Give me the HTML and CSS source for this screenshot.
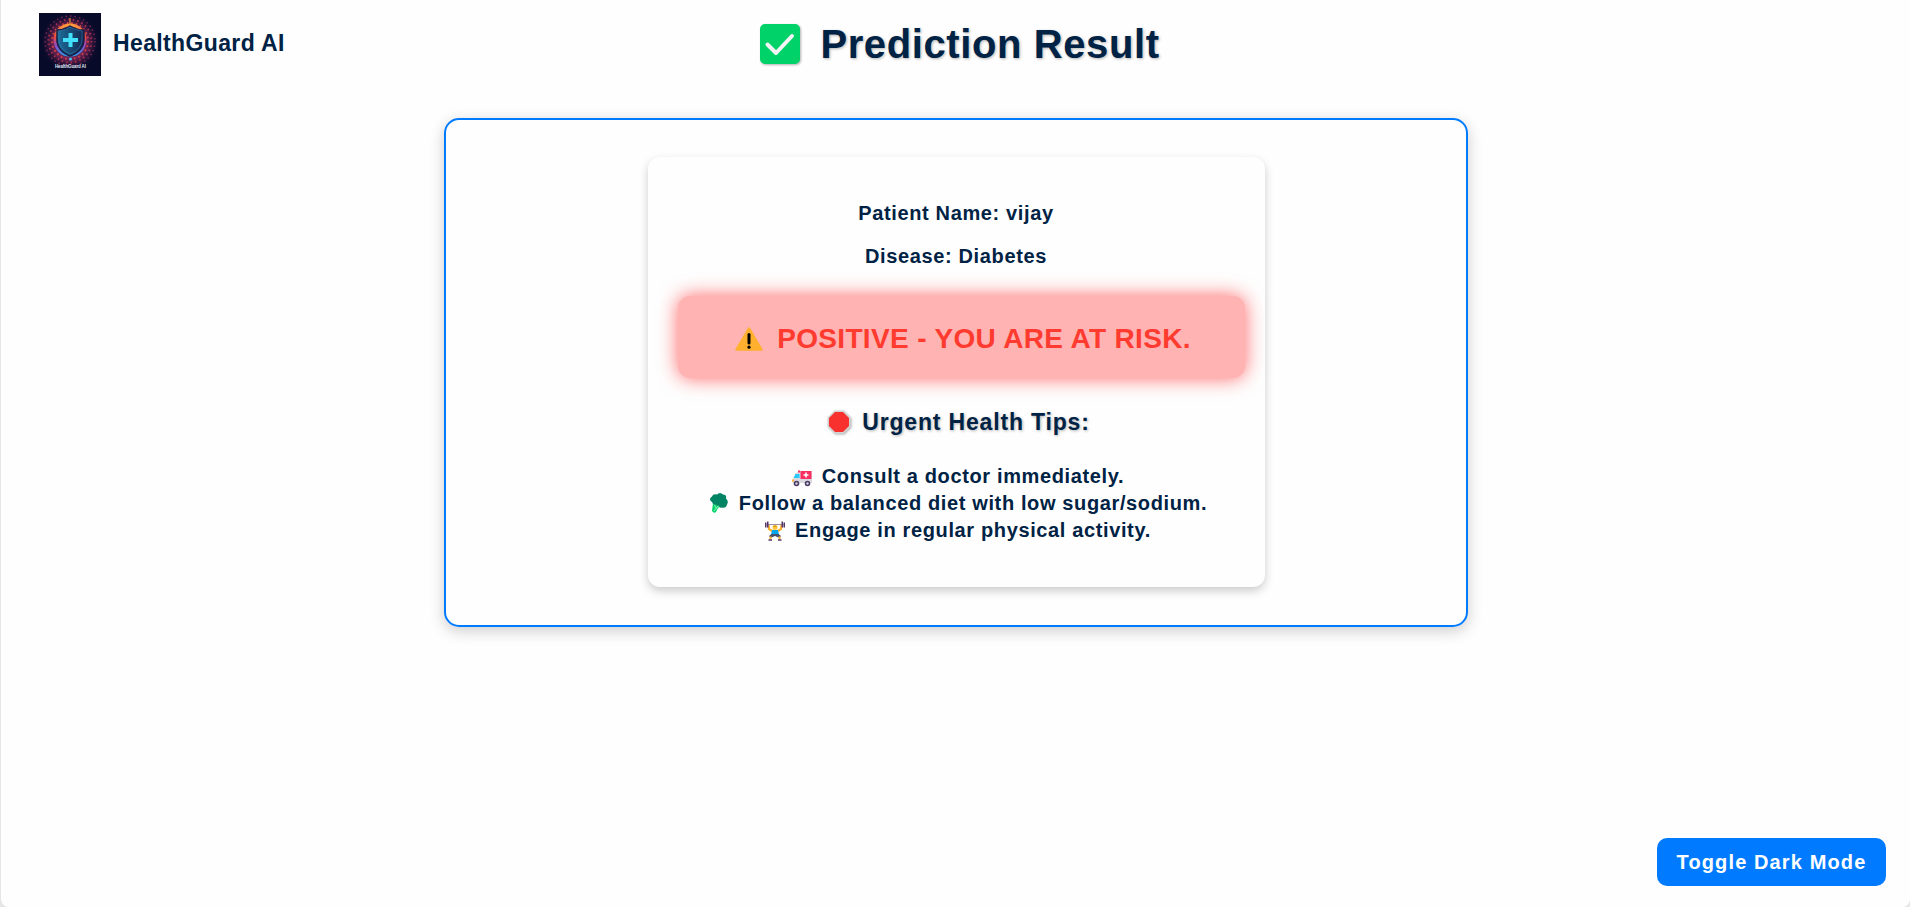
FILE: index.html
```html
<!DOCTYPE html>
<html lang="en">
<head>
<meta charset="utf-8">
<title>Prediction Result</title>
<link rel="stylesheet" href="styles.css">
</head>
<body>
<div class="page">
  <header class="header">
    <div class="brand">
      <svg class="logo" viewBox="0 0 62 63">
        <defs>
          <radialGradient id="glow"><stop offset="0" stop-color="#8a3474"/><stop offset=".6" stop-color="#6a2250"/><stop offset="1" stop-color="#070c2b" stop-opacity="0"/></radialGradient>
          <linearGradient id="ring" x2="0" y2="1"><stop offset="0" stop-color="#ff9a3c"/><stop offset=".4" stop-color="#ee4a3e"/><stop offset=".7" stop-color="#8a4bc8"/><stop offset="1" stop-color="#2b9df0"/></linearGradient>
          <linearGradient id="shield"><stop offset="0" stop-color="#1c6f9c"/><stop offset="1" stop-color="#12264f"/></linearGradient>
        </defs>
        <rect width="62" height="63" fill="#070a29"/>
        <circle cx="31" cy="29" r="30" fill="url(#glow)"/>
        <g fill="none" stroke-dasharray="1.5 3">
          <circle cx="31" cy="28" r="18" stroke="#d8433f" stroke-width="2"/>
          <circle cx="31" cy="28" r="21.5" stroke="#a52e50" stroke-width="2"/>
          <circle cx="31" cy="28" r="25" stroke="#6d2752" stroke-width="1.5"/>
        </g>
        <circle cx="31" cy="27" r="15" fill="#25265a" stroke="url(#ring)" stroke-width="3"/>
        <path d="M31 5v8" stroke="#ff9c32"/>
        <path d="M31 13q6 4 14 4v9q0 12-14 17-13-5-13-17v-9q8 0 13-4z" fill="url(#shield)" stroke="#182047" stroke-width="1.5"/>
        <path d="M31 14q5 3 12 4v8q0 10-12 15-11-5-11-15v-8q7-1 11-4z" fill="none" stroke="#3b7ba8" stroke-width=".6"/>
        <path d="M31.500 20v14M24 27h15" stroke="#42e0fa" stroke-width="4"/>
        <circle cx="31.500" cy="46" r="1.500" fill="#45bdf5"/>
        <text x="31.500" y="55" text-anchor="middle" class="logo-text" textLength="31">HealthGuard AI</text>
      </svg>
      <span class="brand-name">HealthGuard AI</span>
    </div>
    <h1 class="title">
      <svg class="icon-check" viewBox="0 0 40 40"><rect width="40" height="40" rx="5" fill="#00d26a"/><path d="M7.500 20.500l8.500 8.500L32 12" fill="none" stroke="#f4f4f4" stroke-width="4" stroke-linecap="round" stroke-linejoin="round"/></svg>
      <span>Prediction Result</span>
    </h1>
  </header>

  <main class="panel">
    <section class="result">
      <p class="fact">Patient Name: vijay</p>
      <p class="fact">Disease: Diabetes</p>
      <div class="alert">
        <svg class="icon-warning" viewBox="0 0 28 24"><path d="M12.700 1.200q1.300-2 2.600 0L27.500 22q.7 1.700-1.100 1.700H1.600Q-.2 23.700.5 22z" fill="#ffb02e"/><path d="M14 7.500v8.500" stroke="#000" stroke-width="3" stroke-linecap="round"/><circle cx="14" cy="20.200" r="1.600"/></svg>
        <span>POSITIVE - YOU ARE AT RISK.</span>
      </div>
      <h2 class="tips-title">
        <svg class="icon-stop" viewBox="0 0 24 24"><path d="M7.500.5h9l7 7v9l-7 7h-9l-7-7v-9z" fill="#d3d3d3"/><path d="M8 2h8l6 6v8l-6 6H8l-6-6V8z" fill="#f8312f"/></svg>
        <span>Urgent Health Tips:</span>
      </h2>
      <ul class="tips">
        <li class="tip">
          <svg class="icon-tip" viewBox="0 0 20 20"><path d="M8.500 4H20v12H.5v-3l3-7 3-1z" fill="#d9d9df"/><path d="M3.500 7h4v4H1.700z" fill="#26c9fc"/><path d="M8.500 4h11v8h-11z" fill="#f92f60"/><path d="M14 5.500v5M11.500 8h5" stroke="#fff" stroke-width="1.500"/><path d="M6 3.500h2v2H6z" fill="#f92f60"/><path d="M0 12.500h2v2H0z" fill="#ffb02e"/><g fill="#d8d3e4" stroke="#483b62" stroke-width="1.600"><circle cx="4.500" cy="16.500" r="2"/><circle cx="15.500" cy="16.500" r="2"/></g></svg>
          <span>Consult a doctor immediately.</span>
        </li>
        <li class="tip">
          <svg class="icon-tip icon-diet" viewBox="0 0 20 20"><path d="M4 10l7 1 1 2-3 2-2 4q-2 2-4-1z" fill="#00d26a"/><path d="M5 11l2 4M10 12l-5 6" stroke="#67eca3" stroke-width="1.200"/><path d="M3 9Q-1 6 3 3.500 4 .5 8 1.500q3-3 6 0 4 0 3 4 3 3 1 6-1 4-5 3-3 1-3-2-2 1-3-1-3 1-4-2.500z" fill="#008463"/></svg>
          <span>Follow a balanced diet with low sugar/sodium.</span>
        </li>
        <li class="tip">
          <svg class="icon-tip" viewBox="0 0 20 20"><path d="M1.500 3.500h17" fill="none" stroke="#998ea4"/><path d="M3.500 4l.5 4 4 2.500M16.500 4L16 8l-4 2.500" fill="none" stroke="#ffb02e" stroke-width="2.200"/><path d="M0 1.500h1.500v5H0zM2 .5h1.500v6H2zM18.500 1.500H20v5h-1.500zM16.500.5H18v6h-1.500z" fill="#533566"/><circle cx="10" cy="6.500" r="2.500" fill="#ffc83d"/><path d="M7.500 5.500q2.500-2 5 0l-1 .5h-3z" fill="#e39d00"/><path d="M7 9h6l1 5H6z" fill="#00a6ed"/><path d="M6.500 13h7l2.500 2-1.500 2-4.500-2-4.500 2L4 15z" fill="#46506c"/><path d="M5.500 15.500V18M14.500 15.500V18" stroke="#ffb02e" stroke-width="2"/><path d="M3.500 19h3.500M13 19h3.500" stroke="#533566" stroke-width="1.500"/></svg>
          <span>Engage in regular physical activity.</span>
        </li>
      </ul>
    </section>
  </main>
  <button class="toggle" type="button">Toggle Dark Mode</button>
</div>
</body>
</html>
```
FILE: styles.css
```css
* { box-sizing: border-box; }
body {
  margin: 0;
  background: #e6e6e6;
  color: #002244;
  font-family: "Liberation Sans", Arial, sans-serif;
  font-weight: bold;
}
h1, h2, p, ul { margin: 0; padding: 0; }
svg { display: block; flex: none; }
.page {
  display: flex;
  flex-direction: column;
  height: 907px;
  margin-left: 1px;
  background: #fefefe;
  border-radius: 0 0 8px 8px;
}
.header {
  display: grid;
  grid-template-columns: 1fr auto 1fr;
  align-items: start;
  height: 118px;
}
.brand { display: flex; align-items: center; gap: 12px; padding: 13px 0 0 38px; }
.logo { width: 62px; height: 63px; }
.logo-text { font-size: 4.500px; fill: #dfe3f2; }
.brand-name { font-size: 23px; line-height: 28px; letter-spacing: .37px; padding-bottom: 4px; white-space: nowrap; }
.title {
  display: flex;
  gap: 20px;
  padding: 24px 0 0 9px;
  font-size: 40px;
  line-height: 40px;
  letter-spacing: .6px;
  text-shadow: 1px 1px 3px rgba(0, 0, 0, .3);
}
.icon-check { width: 40px; height: 40px; filter: drop-shadow(1px 1px 1px rgba(0, 0, 0, .3)); }
.panel {
  width: 1024px;
  height: 509px;
  margin: 0 auto;
  padding: 37px 0 0 1px;
  border: 2px solid #007bff;
  border-radius: 15px;
  box-shadow: 0 4px 15px rgba(0, 0, 0, .2);
}
.result {
  width: 617px;
  height: 430px;
  margin: 0 auto;
  padding: 35px 20px 0 30px;
  border-radius: 12px;
  background: #fefefe;
  box-shadow: 0 4px 10px rgba(0, 0, 0, .2);
}
.fact { font-size: 20px; line-height: 43px; letter-spacing: .63px; text-align: center; margin-right: 10px; }
.alert {
  display: flex;
  align-items: center;
  justify-content: center;
  gap: 14px;
  height: 82px;
  margin-top: 18px;
  padding: 3px 0 0 4px;
  border-radius: 12px;
  background: #ffb3b3;
  box-shadow: 0 0 20px rgba(255, 0, 0, .6);
  color: #ff3b30;
  font-size: 28px;
  line-height: 32px;
  letter-spacing: .34px;
}
.icon-warning { width: 28px; height: 24px; }
.tips-title {
  display: flex;
  align-items: center;
  justify-content: center;
  gap: 11px;
  height: 28px;
  margin: 30px 5px 0 0;
  font-size: 23px;
  line-height: 28px;
  letter-spacing: .83px;
  text-shadow: 1px 1px 3px rgba(0, 0, 0, .3);
}
.icon-stop { width: 24px; height: 24px; filter: drop-shadow(1px 1px 1px rgba(0, 0, 0, .3)); }
.tips { list-style: none; margin: 27px 6px 0 0; }
.tip { display: flex; align-items: center; justify-content: center; gap: 10px; font-size: 20px; line-height: 27px; letter-spacing: .63px; white-space: nowrap; }
.icon-tip { width: 20px; height: 20px; }
.icon-diet { margin-bottom: 2px; }
.toggle {
  width: 229px;
  height: 48px;
  margin: auto 24px 21px auto;
  padding: 0;
  border: 0;
  border-radius: 10px;
  background: #007bff;
  color: #fff;
  font: bold 20px "Liberation Sans", Arial, sans-serif;
  letter-spacing: 1.12px;
}
```
